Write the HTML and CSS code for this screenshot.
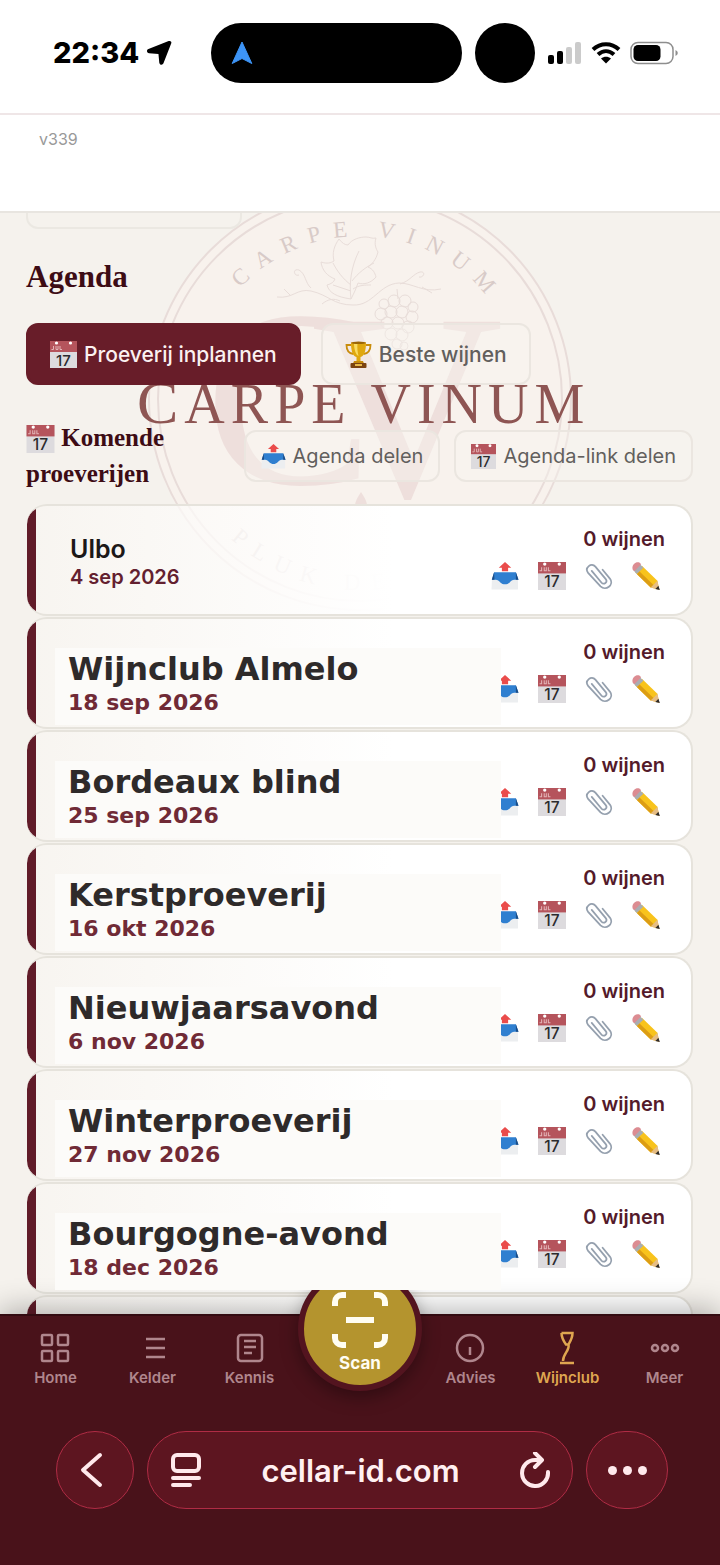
FILE: index.html
```html
<!DOCTYPE html>
<html lang="nl">
<head>
  <meta charset="UTF-8">
  <meta name="viewport" content="width=device-width, initial-scale=1">
  <title>Cellar ID - Wijnclub</title>
  <link rel="stylesheet" href="styles.css">
</head>
<body>

  <!-- Shared icons -->
  <svg class="sprite" aria-hidden="true">
    <symbol id="calendar" viewBox="0 0 27 27">
      <rect width="27" height="27" fill="#dddbde"/>
      <rect width="27" height="11" fill="#b5545c"/>
      <circle cx="6.500" cy="2" r="1.600" fill="#fff"/>
      <circle cx="20.500" cy="2" r="1.600" fill="#fff"/>
      <path d="M1.500 8.500h2V5M6 5v3.500h2V5M10 5v3.500h2" fill="none" stroke="#e3b4b6" stroke-width="1"/>
      <text x="13.500" y="24.500" text-anchor="middle" font-family="Inter, sans-serif" font-size="15" font-weight="500" fill="#2b2b2e">17</text>
    </symbol>
    <symbol id="outbox" viewBox="0 0 27 27">
      <path d="M1 15h25v11.500H0.500z" fill="#eceef0"/>
      <path d="M3 10h21l2.500 7h-4c-2 0-3 1-4.500 2.700-2.500 2.500-6.500 2.500-9 0C7.500 18 6.500 17 4.500 17H.8z" fill="#2f7fd0"/>
      <path d="M3 10l-2.200 7h2.500zM24 10l2.500 7H24z" fill="#1c4d86"/>
      <path d="M13.500 0l6 5.500h-3V9h-6V5.500h-3z" fill="#ea4c4b"/>
    </symbol>
    <symbol id="clip" viewBox="0 0 27 27">
      <path d="M6.500 8.500l9.500 11.500c2.200 2.600 6.200-.8 4-3.500L10 4.500C6.200 0 -.8 5.500 3 10.500l12 13c5 5 13.500-1.500 9-7.500L17 7.500" fill="none" stroke="#95a0ae" stroke-width="1.700" stroke-linecap="round" stroke-linejoin="round"/>
    </symbol>
    <symbol id="pencil" viewBox="0 0 27 27">
      <path d="M9.500 3.500L24.500 18 26 26.500 18 24.500 3 10z" fill="#f8c31c"/>
      <path d="M4.800 11.800L7 9l14 13.500-3 2z" fill="#dc9d14"/>
      <path d="M24.500 18L26.500 27 18 24.500z" fill="#e6bd84"/>
      <path d="M25.500 23L26.800 27 22.500 26z" fill="#2d2a28"/>
      <path d="M7 1.500l4 4-6.500 6-3.500-4z" fill="#a9adb2"/>
      <path d="M.8 7.500C-1 3.500 3.500-1.200 7.500.800l1.300 1.400L2.300 9z" fill="#dc8c92"/>
    </symbol>
    <symbol id="trophy" viewBox="0 0 27 27">
      <path d="M6 4H1.500c0 5 2 8.500 7 9M21 4h4.500c0 5-2 8.500-7 9" fill="none" stroke="#c98c0c" stroke-width="1.800"/>
      <path d="M6 1.500h15c0 8-1.500 13.500-5.500 14.500v4h-4v-4C7.500 15 6 9.500 6 1.500z" fill="#e0a80f"/>
      <path d="M9 2h3.500c-.4 5 0 9 1 13C10.500 13.500 9 8 9 2z" fill="#f9dc62"/>
      <ellipse cx="13.500" cy="1.800" rx="7.500" ry="1.300" fill="#9c6606"/>
      <path d="M9 20h9l1 2.500H8z" fill="#c48a0c"/>
      <rect x="5.500" y="22" width="16" height="5" rx="1" fill="#7b4310"/>
      <rect x="10" y="23" width="7" height="2" fill="#e6b84a"/>
    </symbol>
  </svg>

  <div class="app">
    <header class="status">
      <span class="time">22:34</span>
      <svg class="location" viewBox="0 0 24 24"><path d="M22.500 1.200c.8.300 1.100 1.100.8 1.900l-7.500 19.300c-.8 2-3.700 1.700-4-.6L11 13.500 2 12.600c-2.400-.3-2.700-3.100-.6-4L20.800 1c.6-.2 1.200-.1 1.700.2z"/></svg>
      <div class="island">
        <svg viewBox="0 0 22 24"><path d="M11 1l9.800 21.500L11 17.500 1.200 22.500z" fill="#3d94f6" stroke="#3d94f6" stroke-linejoin="round"/></svg>
      </div>
      <div class="island-dot"></div>
      <svg class="signal" viewBox="0 0 34 22">
        <rect x="0" y="13" width="6" height="9" rx="2"/>
        <rect x="9" y="9" width="6" height="13" rx="2"/>
        <rect x="18" y="5" width="6" height="17" rx="2" fill="#cbcbcb"/>
        <rect x="27" y="0" width="6" height="22" rx="2" fill="#cbcbcb"/>
      </svg>
      <svg class="wifi" viewBox="0 0 30 22">
        <path d="M2 7.500C9.500.500 20.500.500 28 7.500M7 12.500c5-4.500 11-4.500 16 0" fill="none" stroke="#000" stroke-width="4"/>
        <path d="M15 21.500l-5-5c3-2.500 7-2.500 10 0z"/>
      </svg>
      <svg class="battery" viewBox="0 0 50 24">
        <rect x="1" y="1.500" width="42" height="21" rx="7" fill="none" stroke="#8e8e8e" stroke-width="1.500"/>
        <rect x="3.500" y="4" width="27" height="16" rx="4.500"/>
        <path d="M45.500 9v6c3-1.500 3-4.500 0-6z" fill="#8e8e8e"/>
      </svg>
    </header>

    <div class="version">v339</div>

    <main class="content">
      <!-- Club logo behind the list -->
      <svg class="watermark" viewBox="0 0 450 430" aria-hidden="true">
        <defs>
          <path id="ring-top" d="M61 217a164 164 0 0 1 328 0"/>
          <path id="ring-bottom" d="M37 219a188 188 0 0 0 376 0"/>
        </defs>
        <circle class="disc" cx="225" cy="216" r="212"/>
        <g class="ring">
          <circle cx="225" cy="216" r="211"/>
          <circle cx="225" cy="216" r="202"/>
        </g>
        <text class="ring-text"><textPath href="#ring-top" startOffset="52%" text-anchor="middle">CARPE VINUM</textPath></text>
        <text class="ring-text"><textPath href="#ring-bottom" startOffset="50%" text-anchor="middle">PLUK DE DAG</textPath></text>
        <text class="monogram" x="70" y="301" font-size="252">C</text>
        <text class="monogram" x="176" y="313" font-size="266">V</text>
        <path class="mono-fill" d="M226 309c4 6 6 10 6 14h-12c0-4 2-8 6-14z"/>
        <g class="vine">
          <path d="M142 114c16 2 20-9 34-6 18 4 22 14 42 14 20 1 26-21 46-22 14 0 24 10 42 6M187 121c6-5 12-6 18-3M176 105c-6-5-5-14-12-18-7-2-5 7 0 5M265 101c10-3 13-10 20-12 6-1 4 6-1 5M287 104l10 6M155 112l-6-6"/>
          <path d="M216 116c-14-2-22-6-24-14 4-1 7-3 8-6-8-3-13-9-14-17 6 2 10 1 13-1-2-8 0-15 5-22 3 4 6 6 9 6 4-6 12-8 18-8 4 0 6 2 10 1-2 6 0 11 2 14-2 8-6 12-10 15 5 2 7 6 8 10-5 6-12 8-18 6-2 6-4 10-7 16zM216 116c-2-16 0-32 8-48M216 102c-8-6-14-14-18-22M217 98c6-8 14-14 22-18M216 108c-6-2-12-4-18-6M218 106c6-4 12-4 18-4"/>
          <path d="M262 106l1 10"/>
          <circle cx="249" cy="121" r="5"/><circle cx="259" cy="118" r="6"/><circle cx="270" cy="118" r="6"/><circle cx="278" cy="124" r="5"/>
          <circle cx="246" cy="131" r="6"/><circle cx="256" cy="129" r="6"/><circle cx="267" cy="129" r="6"/><circle cx="277" cy="134" r="6"/>
          <circle cx="252" cy="140" r="6"/><circle cx="263" cy="140" r="6"/><circle cx="273" cy="144" r="6"/>
          <circle cx="256" cy="151" r="6"/><circle cx="267" cy="152" r="6"/><circle cx="262" cy="161" r="5"/><circle cx="269" cy="163" r="4"/>
        </g>
        <text class="brand" x="2" y="240"><tspan class="brand-cap">C</tspan>ARPE VINUM</text>
      </svg>

      <div class="chip-end"></div>
      <h1>Agenda</h1>
      <div class="actions">
        <button class="btn btn-primary"><svg><use href="#calendar"/></svg>Proeverij inplannen</button>
        <button class="btn"><svg><use href="#trophy"/></svg>Beste wijnen</button>
      </div>

      <div class="section-head">
        <h2><svg><use href="#calendar"/></svg> Komende proeverijen</h2>
        <button class="btn btn-small"><svg><use href="#outbox"/></svg>Agenda delen</button>
        <button class="btn btn-small"><svg><use href="#calendar"/></svg>Agenda-link delen</button>
      </div>

      <div class="cards">
        <article class="card">
          <div class="info plain">
            <h3>Ulbo</h3>
            <p>4 sep 2026</p>
          </div>
          <div class="side">
            <span class="count">0 wijnen</span>
            <div class="tools">
              <button aria-label="Delen"><svg><use href="#outbox"/></svg></button>
              <button aria-label="Agenda"><svg><use href="#calendar"/></svg></button>
              <button aria-label="Bijlage"><svg><use href="#clip"/></svg></button>
              <button aria-label="Bewerken"><svg><use href="#pencil"/></svg></button>
            </div>
          </div>
        </article>

        <article class="card">
          <div class="info">
            <h3>Wijnclub Almelo</h3>
            <p>18 sep 2026</p>
          </div>
          <div class="side">
            <span class="count">0 wijnen</span>
            <div class="tools">
              <button aria-label="Delen"><svg><use href="#outbox"/></svg></button>
              <button aria-label="Agenda"><svg><use href="#calendar"/></svg></button>
              <button aria-label="Bijlage"><svg><use href="#clip"/></svg></button>
              <button aria-label="Bewerken"><svg><use href="#pencil"/></svg></button>
            </div>
          </div>
        </article>

        <article class="card">
          <div class="info">
            <h3>Bordeaux blind</h3>
            <p>25 sep 2026</p>
          </div>
          <div class="side">
            <span class="count">0 wijnen</span>
            <div class="tools">
              <button aria-label="Delen"><svg><use href="#outbox"/></svg></button>
              <button aria-label="Agenda"><svg><use href="#calendar"/></svg></button>
              <button aria-label="Bijlage"><svg><use href="#clip"/></svg></button>
              <button aria-label="Bewerken"><svg><use href="#pencil"/></svg></button>
            </div>
          </div>
        </article>

        <article class="card">
          <div class="info">
            <h3>Kerstproeverij</h3>
            <p>16 okt 2026</p>
          </div>
          <div class="side">
            <span class="count">0 wijnen</span>
            <div class="tools">
              <button aria-label="Delen"><svg><use href="#outbox"/></svg></button>
              <button aria-label="Agenda"><svg><use href="#calendar"/></svg></button>
              <button aria-label="Bijlage"><svg><use href="#clip"/></svg></button>
              <button aria-label="Bewerken"><svg><use href="#pencil"/></svg></button>
            </div>
          </div>
        </article>

        <article class="card">
          <div class="info">
            <h3>Nieuwjaarsavond</h3>
            <p>6 nov 2026</p>
          </div>
          <div class="side">
            <span class="count">0 wijnen</span>
            <div class="tools">
              <button aria-label="Delen"><svg><use href="#outbox"/></svg></button>
              <button aria-label="Agenda"><svg><use href="#calendar"/></svg></button>
              <button aria-label="Bijlage"><svg><use href="#clip"/></svg></button>
              <button aria-label="Bewerken"><svg><use href="#pencil"/></svg></button>
            </div>
          </div>
        </article>

        <article class="card">
          <div class="info">
            <h3>Winterproeverij</h3>
            <p>27 nov 2026</p>
          </div>
          <div class="side">
            <span class="count">0 wijnen</span>
            <div class="tools">
              <button aria-label="Delen"><svg><use href="#outbox"/></svg></button>
              <button aria-label="Agenda"><svg><use href="#calendar"/></svg></button>
              <button aria-label="Bijlage"><svg><use href="#clip"/></svg></button>
              <button aria-label="Bewerken"><svg><use href="#pencil"/></svg></button>
            </div>
          </div>
        </article>

        <article class="card">
          <div class="info">
            <h3>Bourgogne-avond</h3>
            <p>18 dec 2026</p>
          </div>
          <div class="side">
            <span class="count">0 wijnen</span>
            <div class="tools">
              <button aria-label="Delen"><svg><use href="#outbox"/></svg></button>
              <button aria-label="Agenda"><svg><use href="#calendar"/></svg></button>
              <button aria-label="Bijlage"><svg><use href="#clip"/></svg></button>
              <button aria-label="Bewerken"><svg><use href="#pencil"/></svg></button>
            </div>
          </div>
        </article>

        <article class="card"></article>
      </div>
    </main>

    <footer class="dock">
      <nav class="tabs">
        <a href="#home"><svg viewBox="0 0 30 30"><rect x="2" y="2" width="10" height="10" rx="1"/><rect x="18" y="2" width="10" height="10" rx="1"/><rect x="2" y="18" width="10" height="10" rx="1"/><rect x="18" y="18" width="10" height="10" rx="1"/></svg>Home</a>
        <a href="#kelder"><svg viewBox="0 0 30 30"><path d="M8 6h19M8 15h19M8 24h19"/></svg>Kelder</a>
        <a href="#kennis"><svg viewBox="0 0 30 30"><rect x="3" y="2" width="24" height="26" rx="3"/><path d="M9 8h12M9 14h12M9 20h8"/></svg>Kennis</a>
        <button class="scan"><svg viewBox="0 0 56 56"><path d="M3 14v-4a7 7 0 0 1 7-7h4M42 3h4a7 7 0 0 1 7 7v4M3 42v4a7 7 0 0 0 7 7h4M42 53h4a7 7 0 0 0 7-7v-4M14 28h28"/></svg>Scan</button>
        <a href="#advies"><svg viewBox="0 0 30 30"><circle cx="15" cy="15" r="13"/><path d="M15 14v8"/></svg>Advies</a>
        <a href="#wijnclub" class="active"><svg viewBox="0 0 30 30"><path d="M9.500 0h11c0 5-2 8-4 11.500M9.500 0c0 5 2 8 4.500 11.500h2.500c1.500 6-5.500 9-5.500 16.500M8 30h14"/></svg>Wijnclub</a>
        <a href="#meer"><svg viewBox="0 0 30 30"><circle cx="5" cy="15" r="3"/><circle cx="15" cy="15" r="3"/><circle cx="25" cy="15" r="3"/></svg>Meer</a>
      </nav>

      <div class="browser">
        <button class="round" aria-label="Terug"><svg viewBox="0 0 30 40"><path d="M23 5L6 20l17 15"/></svg></button>
        <div class="address">
          <svg viewBox="0 0 36 36"><rect x="5" y="3" width="26" height="16" rx="4"/><path d="M5 26h26M5 33h17"/></svg>
          <span>cellar-id.com</span>
          <svg viewBox="0 0 36 36"><path d="M31 20a13 13 0 1 1-13-12h6M18 1l7 7-7 7"/></svg>
        </div>
        <button class="round more" aria-label="Meer opties"><i></i><i></i><i></i></button>
      </div>
    </footer>
  </div>

</body>
</html>
```
FILE: styles.css
```css
* {
  box-sizing: border-box;
}

body {
  margin: 0;
  font-family: Inter, sans-serif;
  background: #f5f2ed;
}

h1, h2, h3, p {
  margin: 0;
}

button {
  font: inherit;
  border: 0;
  padding: 0;
  background: none;
}

.sprite {
  display: none;
}

.app {
  display: flex;
  flex-direction: column;
  height: 100vh;
}

/* Status bar */
.status {
  display: flex;
  align-items: center;
  flex: none;
  height: 115px;
  padding: 0 40px 8px 53px;
  background: #fff;
  border-bottom: 2px solid #efe6e7;
}

.time {
  font-size: 29px;
  font-weight: 800;
}

.location {
  width: 25px;
  height: 25px;
  margin-left: 8px;
}

.island {
  display: flex;
  align-items: center;
  flex: 1;
  height: 60px;
  margin-left: 39px;
  padding-left: 20px;
  background: #000;
  border-radius: 30px;
}

.island svg {
  width: 22px;
  height: 24px;
}

.island-dot {
  width: 60px;
  height: 60px;
  margin-left: 13px;
  background: #000;
  border-radius: 50%;
}

.signal {
  width: 34px;
  height: 22px;
  margin-left: 13px;
}

.wifi {
  width: 30px;
  height: 22px;
  margin-left: 9px;
}

.battery {
  width: 50px;
  height: 24px;
  margin-left: 9px;
}

.version {
  flex: none;
  height: 98px;
  padding: 14px 39px;
  font-size: 16px;
  line-height: 20px;
  color: #999;
  background: #fff;
  border-bottom: 2px solid #e8e5e0;
}

/* Content */
.content {
  position: relative;
  flex: 1;
  min-height: 0;
  overflow: hidden;
  padding: 0 27px 0 26px;
}

.content > :not(.watermark) {
  position: relative;
}

.watermark {
  position: absolute;
  top: -30px;
  left: calc(50% - 225px);
  width: 450px;
  height: 430px;
  font-family: "Liberation Serif", serif;
}

.disc {
  fill: #f8f2ed;
}

.ring {
  fill: none;
  stroke: #e8dcd9;
  stroke-width: 2;
}

.ring-text {
  font-size: 23px;
  letter-spacing: 12px;
  fill: #d8cbc8;
}

.monogram, .mono-fill {
  fill: #eedfdc;
}

.vine {
  fill: none;
  stroke: #e8ddd9;
  stroke-width: 1;
}

.brand {
  font-size: 56px;
  letter-spacing: 6px;
  fill: #8e5553;
}

.brand-cap {
  font-size: 62px;
}

.chip-end {
  width: 216px;
  height: 16px;
  border: 2px solid #ebe8e2;
  border-top: 0;
  border-radius: 0 0 12px 12px;
}

h1 {
  margin-top: 30px;
  font: 700 31px/36px "Liberation Serif", serif;
  color: #3d0c15;
}

.actions {
  display: flex;
  gap: 20px;
  margin-top: 28px;
}

.btn {
  display: flex;
  align-items: center;
  gap: 7px;
  height: 62px;
  padding: 0 22px;
  font-size: 21px;
  font-weight: 500;
  color: #625f5d;
  white-space: nowrap;
  background: rgba(248, 245, 240, 0.4);
  border: 2px solid #ebe6e0;
  border-radius: 12px;
}

.btn svg {
  width: 27px;
  height: 27px;
}

.btn-primary {
  color: #fbf1f1;
  background: #681d29;
  border-color: #681d29;
}

.btn-small {
  height: 52px;
  padding: 0 15px;
  font-size: 20px;
  font-weight: 400;
}

.btn-small svg {
  width: 25px;
  height: 25px;
}

.section-head {
  display: flex;
  align-items: center;
  gap: 14px;
  margin: 35px 0 12px;
}

.section-head h2 {
  flex: 1;
  font: 700 25px/36px "Liberation Serif", serif;
  color: #3d0c15;
}

.section-head h2 svg {
  width: 29px;
  height: 28px;
  vertical-align: -7px;
}

/* Tasting cards */
.cards {
  display: flex;
  flex-direction: column;
  gap: 1px;
}

.card {
  display: flex;
  height: 112px;
  margin-left: 1px;
  padding-left: 9px;
  background:
    linear-gradient(#611c29, #611c29) 0 0 / 9px 100% no-repeat,
    linear-gradient(90deg, rgba(250, 247, 243, 0.5), #fff 55%);
  border: 2px solid #e6e3dc;
  border-left: 0;
  border-radius: 20px;
}

.info {
  position: relative;
  z-index: 3;
  flex: 1;
  height: 77px;
  margin: 29px -10px 0 19px;
  padding: 1px 13px 8px;
  font-family: "DejaVu Sans", sans-serif;
  font-weight: 700;
  background: #fcfbf9;
}

.info h3 {
  font-size: 32px;
  line-height: 40px;
  color: #2e2a2a;
}

.info p {
  font-size: 22px;
  line-height: 28px;
  color: #702a36;
}

.info.plain {
  z-index: auto;
  margin-top: 27px;
  padding: 0 15px;
  font-family: Inter, sans-serif;
  background: none;
}

.plain h3 {
  font-size: 25px;
  font-weight: 600;
  line-height: 32px;
  color: #1c1818;
}

.plain p {
  font-size: 20px;
  font-weight: 600;
  line-height: 25px;
  color: #63202f;
}

.side {
  display: flex;
  flex-direction: column;
  align-items: flex-end;
  padding: 20px 26px 0 0;
}

.count {
  font-size: 20px;
  font-weight: 600;
  line-height: 26px;
  color: #541a2a;
}

.tools {
  display: flex;
  gap: 19px;
  margin-top: 10px;
  padding-right: 5px;
}

.tools svg {
  display: block;
  width: 28px;
  height: 28px;
}

/* Bottom navigation and browser bar */
.dock {
  position: relative;
  z-index: 2;
  flex: none;
  height: 251px;
  background: #49121a;
  border-top: 2px solid #330b11;
  box-shadow: 0 -4px 28px rgba(0, 0, 0, 0.3);
}

.tabs {
  display: grid;
  grid-template-columns: repeat(3, 1fr) 124px repeat(3, 1fr);
  justify-items: center;
  height: 115px;
  padding: 0 7px;
}

.tabs a {
  display: flex;
  flex-direction: column;
  align-items: center;
  gap: 5px;
  padding-top: 17px;
  font-size: 15px;
  font-weight: 600;
  line-height: 20px;
  color: #b0868d;
  text-decoration: none;
}

.tabs a svg {
  width: 30px;
  height: 30px;
  overflow: visible;
  fill: none;
  stroke: currentColor;
  stroke-width: 2.5;
}

.tabs .active {
  color: #dfa650;
}

.scan {
  display: flex;
  flex-direction: column;
  align-items: center;
  gap: 5px;
  width: 124px;
  height: 124px;
  margin-top: -49px;
  padding-top: 19px;
  font-size: 17px;
  font-weight: 700;
  line-height: 20px;
  color: #fffdf2;
  background: #b4942e;
  border: 6px solid #53141f;
  border-radius: 50%;
  box-shadow: 0 6px 18px rgba(0, 0, 0, 0.35);
}

.scan svg {
  width: 56px;
  height: 56px;
  fill: none;
  stroke: #fffdf2;
  stroke-width: 6;
}

.browser {
  display: flex;
  gap: 13px;
  padding: 0 52px 0 56px;
}

.round, .address {
  display: flex;
  align-items: center;
  justify-content: center;
  height: 78px;
  background: #5d1520;
  border: 1px solid #b02c45;
  border-radius: 40px;
}

.round {
  width: 78px;
}

.round svg {
  width: 30px;
  height: 40px;
  margin-right: 6px;
}

.address {
  flex: 1;
  justify-content: space-between;
  padding: 0 19px 0 20px;
  font-size: 31px;
  font-weight: 600;
  color: #fff0f1;
}

.address svg {
  width: 36px;
  height: 36px;
}

.browser svg {
  fill: none;
  stroke: #ffe9ec;
  stroke-width: 4;
  stroke-linecap: round;
  stroke-linejoin: round;
}

.more {
  gap: 6px;
  width: 82px;
}

.more i {
  width: 9px;
  height: 9px;
  background: #ffe9ec;
  border-radius: 50%;
}
```
